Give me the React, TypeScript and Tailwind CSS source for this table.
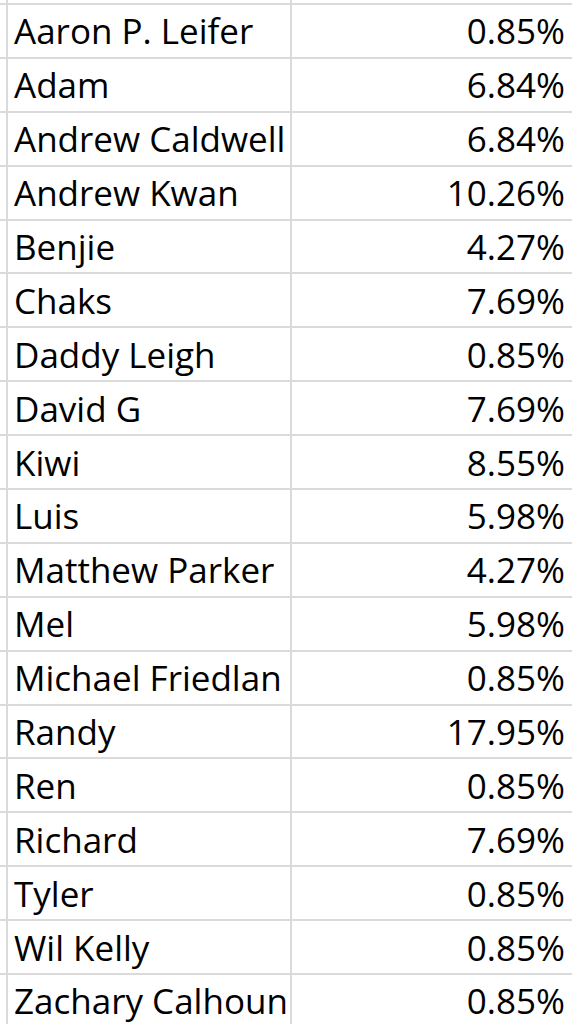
import React from 'react';

const rows: [string, string][] = [
  ['Aaron P. Leifer', '0.85%'],
  ['Adam', '6.84%'],
  ['Andrew Caldwell', '6.84%'],
  ['Andrew Kwan', '10.26%'],
  ['Benjie', '4.27%'],
  ['Chaks', '7.69%'],
  ['Daddy Leigh', '0.85%'],
  ['David G', '7.69%'],
  ['Kiwi', '8.55%'],
  ['Luis', '5.98%'],
  ['Matthew Parker', '4.27%'],
  ['Mel', '5.98%'],
  ['Michael Friedlan', '0.85%'],
  ['Randy', '17.95%'],
  ['Ren', '0.85%'],
  ['Richard', '7.69%'],
  ['Tyler', '0.85%'],
  ['Wil Kelly', '0.85%'],
  ['Zachary Calhoun', '0.85%'],
];

const Row = ({ name, pct }: { name: string; pct: string }) => (
  <div className="flex h-[53.9px] shrink-0 border-t-2 border-[#dadada]">
    <div className="w-[6px] shrink-0" />
    <div className="flex w-[284px] shrink-0 items-center overflow-hidden whitespace-nowrap border-l-2 border-[#dadada] pl-[6px] leading-none">
      {name}
    </div>
    <div className="flex flex-1 items-center justify-end border-l-2 border-[#dadada] pr-[7px] leading-none">
      {pct}
    </div>
  </div>
);

export default function App() {
  return (
    <div
      className="flex h-[1024px] w-[572px] flex-col overflow-hidden bg-white text-[35px] text-black"
      style={{ fontFamily: '"Open Sans", sans-serif' }}
    >
      {/* partial row above the first visible one */}
      <div className="flex h-[3px] shrink-0">
        <div className="w-[6px] shrink-0" />
        <div className="w-[284px] shrink-0 border-l-2 border-[#dadada]" />
        <div className="flex-1 border-l-2 border-[#dadada]" />
      </div>
      {rows.map(([name, pct]) => (
        <Row key={name} name={name} pct={pct} />
      ))}
    </div>
  );
}
